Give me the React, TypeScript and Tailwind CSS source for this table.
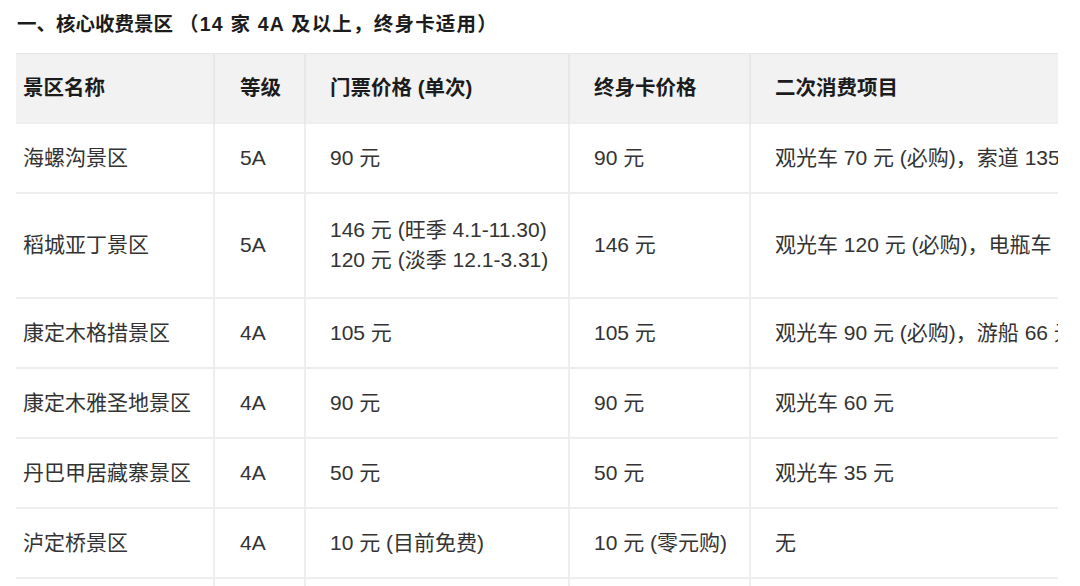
const rows = [
  { name: "海螺沟景区", level: "5A", price: ["90 元"], card: "90 元", extra: "观光车 70 元 (必购)，索道 135 元 (单程)" },
  {
    name: "稻城亚丁景区",
    level: "5A",
    price: ["146 元 (旺季 4.1-11.30)", "120 元 (淡季 12.1-3.31)"],
    card: "146 元",
    extra: "观光车 120 元 (必购)，电瓶车 80 元",
  },
  { name: "康定木格措景区", level: "4A", price: ["105 元"], card: "105 元", extra: "观光车 90 元 (必购)，游船 66 元" },
  { name: "康定木雅圣地景区", level: "4A", price: ["90 元"], card: "90 元", extra: "观光车 60 元" },
  { name: "丹巴甲居藏寨景区", level: "4A", price: ["50 元"], card: "50 元", extra: "观光车 35 元" },
  { name: "泸定桥景区", level: "4A", price: ["10 元 (目前免费)"], card: "10 元 (零元购)", extra: "无" },
  { name: "新都桥景区", level: "4A", price: ["免费"], card: "免费", extra: "无" },
]

export default function App() {
  return (
    <div className="h-[586px] w-[1080px] overflow-hidden bg-white font-['Liberation_Sans','Noto_Sans_CJK_SC',sans-serif] text-[#333]">
      {/* Title */}
      <h2 className="pl-[17px] pt-[11px] text-[19.5px] font-bold leading-[26px] text-[#1c1c1c]">
        一、核心收费景区<span className="ml-[6px] tracking-[1.2px]">（14 家 4A 及以上，终身卡适用）</span>
      </h2>

      {/* Table, clipped on the right */}
      <div className="ml-4 mt-[16px] w-[1042px] overflow-hidden">
        <table className="w-[1260px] table-fixed border-collapse text-left text-[21px] leading-[30px]">
          <colgroup>
            <col className="w-[198px]" />
            <col className="w-[91px]" />
            <col className="w-[264px]" />
            <col className="w-[181px]" />
            <col className="w-[526px]" />
          </colgroup>
          <thead>
            <tr className="h-[69px] border-t border-[#e6e6e6] bg-[#f2f2f2] text-[20.5px] text-[#1c1c1c]">
              <th className="pl-[7px] font-bold">景区名称</th>
              <th className="border-l-2 border-[#e8e8e8] pl-[25px] font-bold">等级</th>
              <th className="border-l-2 border-[#e8e8e8] pl-[24px] font-bold">门票价格 (单次)</th>
              <th className="border-l-2 border-[#e8e8e8] pl-[24px] font-bold">终身卡价格</th>
              <th className="border-l-2 border-[#e8e8e8] pl-[24px] font-bold">二次消费项目</th>
            </tr>
          </thead>
          <tbody>
            {rows.map((r) => (
              <tr
                key={r.name}
                className={`border-t-2 border-[#eeeeee] ${r.price.length > 1 ? "h-[105px]" : "h-[70px]"}`}
              >
                <td className="whitespace-nowrap pl-[7px]">{r.name}</td>
                <td className="border-l-2 border-[#eeeeee] pl-[25px]">{r.level}</td>
                <td className="whitespace-nowrap border-l-2 border-[#eeeeee] pl-[24px]">
                  {r.price.map((p) => (
                    <div key={p}>{p}</div>
                  ))}
                </td>
                <td className="whitespace-nowrap border-l-2 border-[#eeeeee] pl-[24px]">{r.card}</td>
                <td className="whitespace-nowrap border-l-2 border-[#eeeeee] pl-[24px]">{r.extra}</td>
              </tr>
            ))}
          </tbody>
        </table>
      </div>
    </div>
  )
}
